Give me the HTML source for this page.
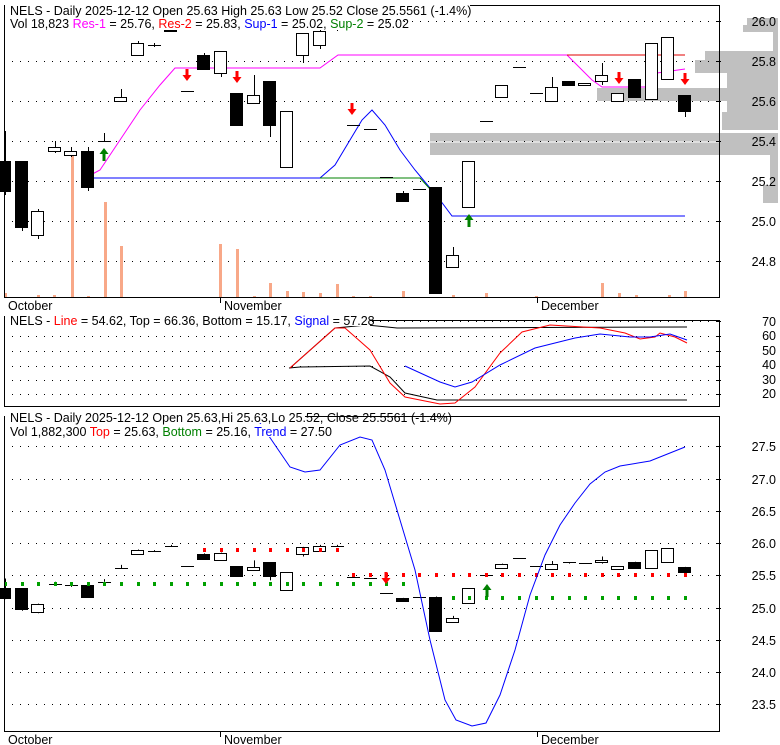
<!DOCTYPE html>
<html><head><meta charset="utf-8"><style>
html,body{margin:0;padding:0;background:#fff;width:780px;height:745px;overflow:hidden}
svg{display:block}
text{font-family:"Liberation Sans",Arial,sans-serif;font-size:12.5px}
.ax{font-size:13px}
</style></head><body>
<svg id="s" width="780" height="745" xmlns="http://www.w3.org/2000/svg">
<rect width="780" height="745" fill="#fff"/>
<g id="bg"></g>
<g fill="#c0c0c0">
<rect x="747" y="18" width="31" height="14"/>
<rect x="743" y="25" width="35" height="7"/>
<rect x="773" y="32" width="5" height="19"/>
<rect x="705" y="51" width="73" height="22"/>
<rect x="695" y="60" width="83" height="13"/>
<rect x="597" y="88" width="181" height="13"/>
<rect x="727" y="73" width="51" height="47"/>
<rect x="722" y="112" width="56" height="18"/>
<rect x="430" y="133" width="348" height="22"/>
<rect x="770" y="155" width="8" height="45"/>
<rect x="763" y="185" width="15" height="18"/>
</g>
<line x1="430" y1="142" x2="720" y2="142" stroke="#fff" stroke-width="1"/>
<g id="grid"></g>
<g id="vol" fill="#f8a888"></g>
<polyline fill="none" stroke="#ff00ff" points="85,178 100,170 120,140 140,110 160,85 175,68 320,68 338,55 567,55 580,68 592,80 602,87 645,87 657,73 685,69"/>
<polyline fill="none" stroke="#e00000" points="567,55 685,55"/>
<polyline fill="none" stroke="#0000ff" points="85,178 320,178 335,165 350,140 362,120 372,110 385,125 400,150 415,170 425,182 440,200 452,216 685,216"/>
<polyline fill="none" stroke="#008000" points="320,178 420,178 430,189"/>
<g id="c1"></g>
<g id="c3"></g>
<g id="arr"></g>
<polyline fill="none" stroke="#000" points="289,368 300,367 370,366 390,377 405,393 437,400 687,400"/>
<polyline fill="none" stroke="#000" points="290,368 335,328 367,325 397,328 687,327"/>
<polyline fill="none" stroke="#ff0000" points="290,368 335,328 345,328 370,350 390,383 405,397 440,404 455,403 475,387 500,353 522,332 550,325 600,328 625,333 640,339 655,337 660,333 675,337 687,343"/>
<polyline fill="none" stroke="#0000ff" points="405,366 440,382 455,387 472,382 500,365 535,348 575,338 600,334 630,337 650,337 670,334 687,340"/>
<polyline fill="none" stroke="#0000ff" points="258,420 275,445 290,467 305,472 320,470 340,445 360,437 372,440 385,470 400,520 415,570 430,640 445,700 456,720 472,726 486,723 500,695 515,650 530,595 545,555 560,525 575,503 590,484 605,472 620,466 650,461 685,447"/>
<!-- header backgrounds -->
<g fill="#fff">
<rect x="8" y="3" width="464" height="13"/>
<rect x="8" y="17" width="376" height="13"/>
<rect x="8" y="313" width="362" height="13"/>
<rect x="8" y="410" width="298" height="13"/>
<rect x="8" y="424" width="318" height="13"/>
</g>
<g fill="none" stroke="#000" stroke-width="1">
<path d="M4.5,5 V297.5 H719.5 V5.5 H470"/>
<path d="M4.5,316 V406.5 H719.5 V320.5 H370"/>
<path d="M4.5,416 V731.5 H719.5 V416.5 H305"/>
<path d="M220.5,297 v6 M537.5,297 v6 M220.5,731 v6 M537.5,731 v6"/>
</g>
<text x="10" y="15" fill="#000">NELS - Daily 2025-12-12 Open 25.63  High 25.63  Low 25.52  Close 25.5561 (-1.4%)</text>
<text x="10" y="28" fill="#000">Vol 18,823 <tspan fill="#ff00ff">Res-1</tspan> = 25.76, <tspan fill="#ff0000">Res-2</tspan> = 25.83, <tspan fill="#0000ff">Sup-1</tspan> = 25.02, <tspan fill="#008000">Sup-2</tspan> = 25.02</text>
<text x="10" y="325" fill="#000">NELS - <tspan fill="#ff0000">Line</tspan> = 54.62, Top = 66.36, Bottom = 15.17, <tspan fill="#0000ff">Signal</tspan> = 57.28</text>
<text x="10" y="422" fill="#000">NELS - Daily 2025-12-12 Open 25.63,Hi 25.63,Lo 25.52, Close 25.5561 (-1.4%)</text>
<text x="10" y="436" fill="#000">Vol 1,882,300 <tspan fill="#ff0000">Top</tspan> = 25.63, <tspan fill="#008000">Bottom</tspan> = 25.16, <tspan fill="#0000ff">Trend</tspan> = 27.50</text>
<g class="ax" fill="#000">
<text x="8" y="310">October</text><text x="224" y="310">November</text><text x="541" y="310">December</text>
<text x="8" y="744">October</text><text x="224" y="744">November</text><text x="541" y="744">December</text>
</g>
<g fill="#000" text-anchor="end" font-size="13">
<text x="776" y="26">26.0</text><text x="776" y="66">25.8</text><text x="776" y="106">25.6</text><text x="776" y="146">25.4</text><text x="776" y="186">25.2</text><text x="776" y="226">25.0</text><text x="776" y="266">24.8</text>
<text x="776" y="326">70</text><text x="776" y="340">60</text><text x="776" y="355">50</text><text x="776" y="369">40</text><text x="776" y="384">30</text><text x="776" y="398">20</text>
<text x="776" y="451">27.5</text><text x="776" y="484">27.0</text><text x="776" y="516">26.5</text><text x="776" y="548">26.0</text><text x="776" y="580">25.5</text><text x="776" y="613">25.0</text><text x="776" y="645">24.5</text><text x="776" y="677">24.0</text><text x="776" y="709">23.5</text>
</g>
</svg>
<script>
var NS="http://www.w3.org/2000/svg";
function el(p,t,a){var e=document.createElementNS(NS,t);for(var k in a)e.setAttribute(k,a[k]);document.getElementById(p).appendChild(e);return e;}
function dots(y,x0,x1){for(var x=x0;x<x1;x+=8)el('grid','rect',{x:x,y:y,width:1,height:1,fill:'#000'});el('grid','rect',{x:x1,y:y,width:5,height:1,fill:'#000'});}
[21,61,101,141,181,221,261].forEach(function(y){dots(y,12,716)});
[321,336,351,366,380,394].forEach(function(y){dots(y,12,716)});
[446,479,511,543,575,608,640,672,704].forEach(function(y){dots(y,12,716)});
[[72,155],[105,202],[121,246],[220,244],[237,249],[270,283],[287,291],[337,284],[5,293],[38,295],[54,295],[88,296],[254,296],[303,292],[320,293],[353,296],[370,296],[403,291],[453,295],[486,293],[536,296],[602,283],[619,293],[685,291],[669,295],[636,295]].forEach(function(v){el('vol','rect',{x:v[0]-1,y:v[1],width:3,height:297-v[1]})});
var C=[[25.30,25.15,25.45,25.13],[25.30,24.97,25.30,24.95],[24.93,25.05,25.06,24.91],[25.35,25.37,25.40,25.34],[25.33,25.35,25.37,25.32],[25.35,25.17,25.37,25.15],[25.40,25.40,25.44,25.40],[25.60,25.62,25.66,25.60],[25.83,25.89,25.90,25.83],[25.88,25.88,25.89,25.87],[25.96,25.95,25.97,25.95],[25.65,25.65,25.65,25.65],[25.83,25.76,25.84,25.76],[25.74,25.85,25.85,25.72],[25.64,25.48,25.64,25.48],[25.59,25.63,25.73,25.59],[25.70,25.48,25.70,25.42],[25.27,25.55,25.55,25.27],[25.83,25.94,25.94,25.79],[25.88,25.95,25.97,25.86],[25.96,25.96,25.97,25.95],[25.48,25.48,25.48,25.48],[25.46,25.46,25.46,25.46],[25.22,25.22,25.22,25.22],[25.14,25.10,25.15,25.10],[25.16,25.16,25.16,25.16],[25.17,24.64,25.17,24.64],[24.77,24.83,24.87,24.77],[25.07,25.30,25.30,25.07],[25.50,25.50,25.50,25.50],[25.62,25.68,25.68,25.62],[25.77,25.77,25.77,25.77],[25.64,25.64,25.64,25.64],[25.60,25.67,25.72,25.60],[25.70,25.68,25.70,25.68],[25.68,25.69,25.69,25.68],[25.70,25.73,25.79,25.68],[25.60,25.64,25.64,25.60],[25.71,25.62,25.71,25.62],[25.61,25.89,25.89,25.61],[25.71,25.92,25.92,25.71],[25.63,25.55,25.63,25.52]];
function y1(p){return 21+(26-p)*200}
function y3(p){return 543+(26-p)*64.5}
function draw(g,f,clipTop){C.forEach(function(c,i){var x=Math.round(5+16.58*i);var o=f(c[0]),cl=f(c[1]),h=f(c[2]),l=f(c[3]);
if(clipTop){h=Math.max(h,6)}
el(g,'line',{x1:x+.5,y1:h,x2:x+.5,y2:l,stroke:'#000'});
var t=Math.min(o,cl),b=Math.max(o,cl);
if(b-t<1.5){el(g,'line',{x1:x-6,y1:Math.round(t)+.5,x2:x+7,y2:Math.round(t)+.5,stroke:'#000'});}
else el(g,'rect',{x:x-6.5,y:Math.round(t)+.5,width:12,height:Math.round(b-t),fill:c[1]<c[0]?'#000':'#fff',stroke:'#000'});});}
draw('c1',y1,true);draw('c3',y3,false);
function sd(y,x0,x1,col){for(var i=0;i<42;i++){var x=Math.round(5+16.58*i);if(x>=x0&&x<=x1)el('c3','rect',{x:x-1,y:y-2,width:3,height:4,fill:col});}}
sd(550,188,345,'#ff0000');sd(575,352,690,'#ff0000');sd(584,0,410,'#00a000');sd(598,450,690,'#00a000');
function down(x,y,col){el('arr','path',{d:'M'+(x-1.5)+','+y+'h3v6h3l-4.5,6l-4.5,-6h3z',fill:col});}
function up(x,y,col){el('arr','path',{d:'M'+x+','+y+'l4.5,6h-3v7h-3v-7h-3z',fill:col});}
down(187,69,'#ff0000');down(237,71,'#ff0000');down(352,103,'#ff0000');down(619,72,'#ff0000');down(685,73,'#ff0000');
up(104,148,'#008000');up(469,214,'#008000');
down(386,572,'#ff0000');up(487,584,'#008000');
</script>
</body></html>
